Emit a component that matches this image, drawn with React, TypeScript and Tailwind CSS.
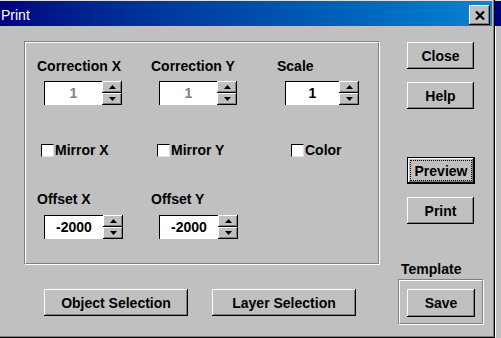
import React from "react";

const bevel =
  "shadow-[inset_-1px_-1px_0_#000,inset_1px_1px_0_#fff,inset_-2px_-2px_0_#808080]";

function Btn({ children, className = "" }: { children: React.ReactNode; className?: string }) {
  return (
    <div
      className={`flex items-center justify-center bg-[#c0c0c0] ${bevel} text-[14px] leading-4 font-bold text-black ${className}`}
    >
      {children}
    </div>
  );
}

function SpinBtn({ up }: { up?: boolean }) {
  return (
    <div className={`flex h-[12px] w-[20px] items-center justify-center bg-[#c0c0c0] ${bevel}`}>
      <svg width="7" height="4" viewBox="0 0 7 4">
        {up ? <path d="M3.5 0 L7 4 L0 4 Z" fill="#000" /> : <path d="M0 0 L7 0 L3.5 4 Z" fill="#000" />}
      </svg>
    </div>
  );
}

function Spin({ value, w, disabled }: { value: string; w: string; disabled?: boolean }) {
  return (
    <div className="flex">
      <div
        className={`flex h-[24px] ${w} items-center justify-center border-t border-l border-black bg-white text-[14px] font-bold ${
          disabled ? "text-[#808080]" : "text-black"
        }`}
      >
        {value}
      </div>
      <div className="flex flex-col">
        <SpinBtn up />
        <SpinBtn />
      </div>
    </div>
  );
}

function Check({ label }: { label: string }) {
  return (
    <div className="flex items-center gap-[1px]">
      <div className="h-[13px] w-[13px] border-t border-l border-black border-b border-r border-b-[#dfdfdf] border-r-[#dfdfdf] bg-white" />
      <span className="text-[14px] leading-4 font-bold text-black">{label}</span>
    </div>
  );
}

export default function App() {
  return (
    <div className="flex h-[338px] w-[501px] overflow-hidden bg-[#c0c0c0] font-['Liberation_Sans',Arial,sans-serif]">
      <div className="flex h-[338px] w-[495px] flex-col border-r border-b border-black">
        <div className="flex flex-1 flex-col border-r border-b border-[#808080]">
          <div className="h-px bg-[#dfdfdf]" />
          <div className="mr-[1px] flex h-[25px] items-start justify-between bg-gradient-to-r from-[#000080] to-[#1084d0]">
            <span className="mt-[6px] pl-[1px] text-[14px] leading-4 text-white">Print</span>
            <div className={`mt-[4px] mr-[2px] flex h-[20px] w-[21px] items-center justify-center bg-[#c0c0c0] ${bevel}`}>
              <svg width="10" height="9" viewBox="0 0 10 9">
                <path d="M1 0.5 L9 8.5 M9 0.5 L1 8.5" stroke="#000" strokeWidth="2.2" />
              </svg>
            </div>
          </div>
          <div className="flex flex-1">
            {/* Left column */}
            <div className="flex flex-col pt-[15px] pl-[24px]">
              <div className="flex h-[224px] w-[356px] border-t border-l border-[#808080] border-b border-r border-b-white border-r-white">
                <div className="flex flex-1 flex-col border-t border-l border-white border-b border-r border-b-[#808080] border-r-[#808080] pt-[15px]">
                  <div className="flex pl-[11px]">
                    <div className="flex w-[114px] flex-col">
                      <span className="text-[14px] leading-4 font-bold">Correction X</span>
                      <div className="mt-[7px] ml-[7px]">
                        <Spin value="1" w="w-[58px]" disabled />
                      </div>
                    </div>
                    <div className="flex w-[126px] flex-col">
                      <span className="text-[14px] leading-4 font-bold">Correction Y</span>
                      <div className="mt-[7px] ml-[8px]">
                        <Spin value="1" w="w-[58px]" disabled />
                      </div>
                    </div>
                    <div className="flex flex-col">
                      <span className="text-[14px] leading-4 font-bold">Scale</span>
                      <div className="mt-[7px] ml-[8px]">
                        <Spin value="1" w="w-[54px]" />
                      </div>
                    </div>
                  </div>
                  <div className="mt-[37px] flex pl-[15px]">
                    <div className="w-[116px]">
                      <Check label="Mirror X" />
                    </div>
                    <div className="w-[134px]">
                      <Check label="Mirror Y" />
                    </div>
                    <Check label="Color" />
                  </div>
                  <div className="mt-[33px] flex pl-[11px]">
                    <div className="flex w-[114px] flex-col">
                      <span className="text-[14px] leading-4 font-bold">Offset X</span>
                      <div className="mt-[8px] ml-[7px]">
                        <Spin value="-2000" w="w-[59px]" />
                      </div>
                    </div>
                    <div className="flex w-[126px] flex-col">
                      <span className="text-[14px] leading-4 font-bold">Offset Y</span>
                      <div className="mt-[8px] ml-[8px]">
                        <Spin value="-2000" w="w-[59px]" />
                      </div>
                    </div>
                  </div>
                </div>
              </div>
              <div className="mt-[24px] flex gap-[24px] pl-[20px]">
                <Btn className="h-[27px] w-[144px]">Object Selection</Btn>
                <Btn className="h-[27px] w-[144px]">Layer Selection</Btn>
              </div>
            </div>
            {/* Right column */}
            <div className="ml-[18px] flex w-[86px] flex-col pt-[16px]">
              <Btn className="ml-[9px] h-[27px] w-[67px]">Close</Btn>
              <Btn className="mt-[13px] ml-[9px] h-[27px] w-[67px]">Help</Btn>
              <div className="mt-[48px] ml-[9px] flex h-[27px] w-[68px] border border-black">
                <div className={`flex flex-1 items-center justify-center bg-[#c0c0c0] ${bevel} p-[2px]`}>
                  <div className="flex h-full w-full items-center justify-center border border-dotted border-black text-[14px] leading-4 font-bold">
                    Preview
                  </div>
                </div>
              </div>
              <Btn className="mt-[13px] ml-[9px] h-[27px] w-[67px]">Print</Btn>
              <span className="mt-[37px] pl-[3px] text-[14px] leading-4 font-bold">Template</span>
              <div className="mt-[2px] flex h-[46px] w-[86px] border-t border-l border-[#808080] border-b border-r border-b-white border-r-white">
                <div className="flex flex-1 border-t border-l border-white border-b border-r border-b-[#808080] border-r-[#808080] pt-[8px] pl-[7px]">
                  <Btn className="h-[28px] w-[68px]">Save</Btn>
                </div>
              </div>
            </div>
          </div>
        </div>
      </div>
      <div className="flex flex-1 flex-col">
        <div className="h-px bg-[#dfdfdf]" />
        <div className="h-[25px] bg-[#000080]" />
        <div className="flex-1 border-l border-white bg-[#c0c0c0]" />
      </div>
    </div>
  );
}
